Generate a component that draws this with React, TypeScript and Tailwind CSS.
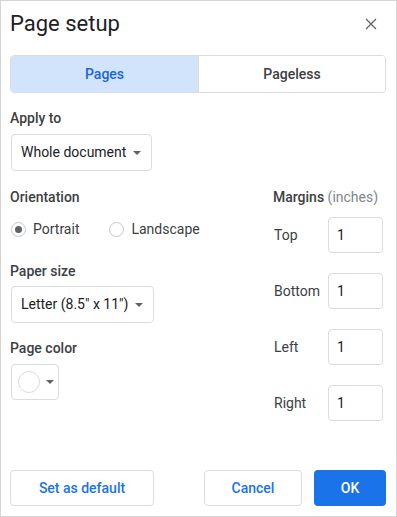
import React from "react";

function Caret() {
  return (
    <svg width="8" height="4" viewBox="0 0 8 4" className="shrink-0">
      <path d="M0 0 L8 0 L4 4 Z" fill="#5f6368" />
    </svg>
  );
}

function Select({ label }: { label: string }) {
  return (
    <div className="ml-[1px] inline-flex h-[37px] items-center gap-[7px] whitespace-nowrap rounded-[4px] border border-[#dadce0] bg-white pl-[9px] pr-[10px]">
      <span className="text-[14px] text-[#202124]">{label}</span>
      <Caret />
    </div>
  );
}

function Radio({ checked, label }: { checked?: boolean; label: string }) {
  return (
    <div className="flex items-center gap-[7px]">
      <div className="ml-[1px] flex h-[15px] w-[15px] items-center justify-center rounded-full border border-[#c4c7c5] bg-white">
        {checked && <div className="h-[7px] w-[7px] rounded-full bg-[#5f6368]" />}
      </div>
      <span className="text-[14px] text-[#3c4043]">{label}</span>
    </div>
  );
}

function MarginRow({ label }: { label: string }) {
  return (
    <div className="flex h-[36px] items-center">
      <span className="w-[55px] pl-[1px] text-[14px] text-[#3c4043]">{label}</span>
      <div className="flex h-[36px] w-[55px] items-center rounded-[4px] border border-[#dadce0] bg-white pl-[8px] text-[14px] text-[#202124]">
        1
      </div>
    </div>
  );
}

export default function App() {
  return (
    <div
      className="flex h-[517px] w-[397px] flex-col border border-[#d5d5d5] bg-white pl-[9px] pr-[10px] pb-[10px]"
      style={{ fontFamily: "Roboto, 'Liberation Sans', sans-serif" }}
    >
      {/* Header */}
      <div className="mt-[9px] flex h-[28px] items-center justify-between">
        <h1 className="text-[22px] leading-[28px] text-[#202124]">Page setup</h1>
        <svg width="12" height="12" viewBox="0 0 12 12" className="mr-[9px]">
          <path d="M1 1 L11 11 M11 1 L1 11" stroke="#5f6368" strokeWidth="1.3" />
        </svg>
      </div>

      {/* Tabs */}
      <div className="mt-[17px] flex h-[38px] overflow-hidden rounded-[4px] border border-[#dadce0]">
        <div className="flex w-[187px] items-center justify-center bg-[#d2e3fc] text-[14px] font-medium text-[#1967d2]">
          Pages
        </div>
        <div className="flex flex-1 items-center justify-center border-l border-[#dadce0] bg-white text-[14px] font-medium text-[#3c4043]">
          Pageless
        </div>
      </div>

      {/* Apply to */}
      <div className="mt-[15px] text-[14px] font-medium leading-[20px] text-[#3c4043]">Apply to</div>
      <div className="mt-[6px] flex">
        <Select label="Whole document" />
      </div>

      {/* Body two columns */}
      <div className="mt-[16px] flex">
        <div className="flex flex-1 flex-col">
          <div className="text-[14px] font-medium leading-[20px] text-[#3c4043]">Orientation</div>
          <div className="mt-[12px] flex h-[20px] items-center gap-[29px]">
            <Radio checked label="Portrait" />
            <Radio label="Landscape" />
          </div>
          <div className="mt-[22px] text-[14px] font-medium leading-[20px] text-[#3c4043]">Paper size</div>
          <div className="mt-[5px] flex">
            <Select label={'Letter (8.5" x 11")'} />
          </div>
          <div className="mt-[15px] text-[14px] font-medium leading-[20px] text-[#3c4043]">Page color</div>
          <div className="ml-[1px] mt-[6px] flex h-[36px] w-[48px] items-center gap-[6px] rounded-[4px] border border-[#dadce0] bg-white pl-[6px]">
            <div className="h-[22px] w-[22px] rounded-full border border-[#dadce0] bg-white" />
            <Caret />
          </div>
        </div>

        <div className="flex w-[113px] flex-col">
          <div className="whitespace-nowrap text-[14px] leading-[20px]">
            <span className="font-medium text-[#3c4043]">Margins</span>{" "}
            <span className="text-[#80868b]">(inches)</span>
          </div>
          <div className="mt-[10px] flex flex-col gap-[20px]">
            <MarginRow label="Top" />
            <MarginRow label="Bottom" />
            <MarginRow label="Left" />
            <MarginRow label="Right" />
          </div>
        </div>
      </div>

      {/* Footer */}
      <div className="mt-auto flex h-[36px] items-center">
        <div className="flex h-[36px] w-[144px] items-center justify-center rounded-[4px] border border-[#dadce0] bg-white text-[14px] font-medium text-[#1a73e8]">
          Set as default
        </div>
        <div className="ml-auto flex h-[36px] w-[98px] items-center justify-center rounded-[4px] border border-[#dadce0] bg-white text-[14px] font-medium text-[#1a73e8]">
          Cancel
        </div>
        <div className="ml-[12px] flex h-[36px] w-[72px] items-center justify-center rounded-[4px] bg-[#1a73e8] text-[14px] font-medium text-white">
          OK
        </div>
      </div>
    </div>
  );
}
